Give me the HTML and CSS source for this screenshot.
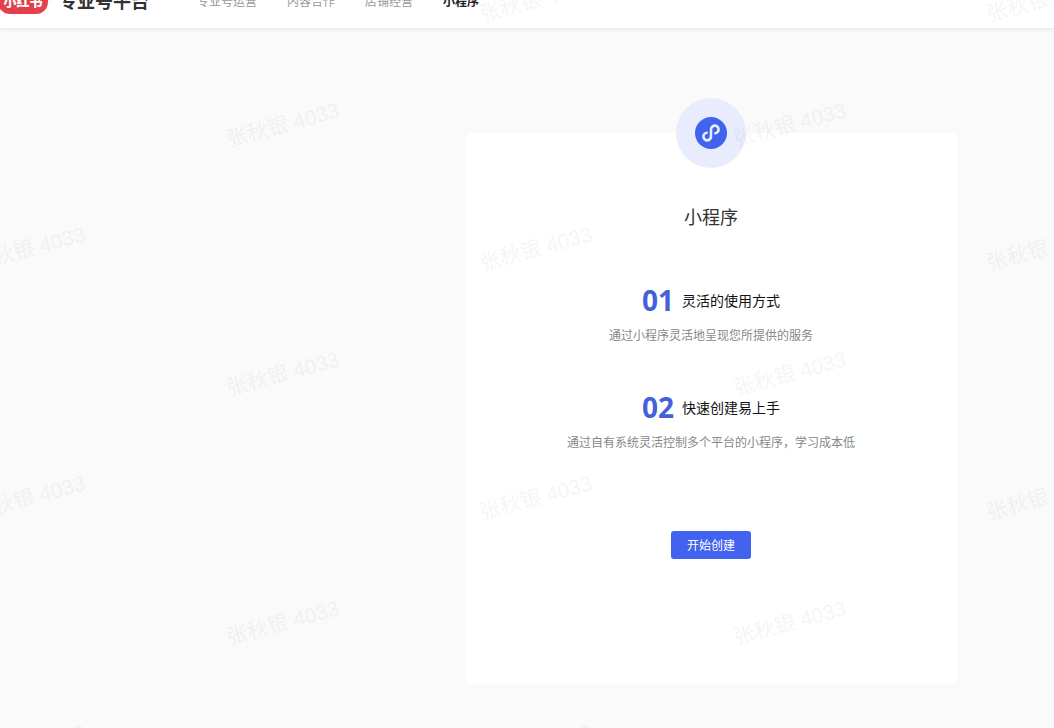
FILE: index.html
```
<!DOCTYPE html>
<html lang="zh-CN">
<head>
    <meta charset="UTF-8">
    <meta name="viewport" content="width=device-width, initial-scale=1.0">
    <title>小程序 - 专业号平台</title>
    <link rel="stylesheet" href="styles.css">
</head>
<body>
    <header class="header">
        <a class="logo" href="#">小红书</a>
        <span class="platform">专业号平台</span>
        <nav class="nav">
            <a href="#">专业号运营</a>
            <a href="#">内容合作</a>
            <a href="#">店铺经营</a>
            <a href="#" class="active">小程序</a>
        </nav>
    </header>

    <main class="main">
        <section class="card">
            <div class="card-icon">
                <svg width="32" height="32" viewBox="0 0 32 32">
                    <circle cx="16" cy="16" r="16" fill="#4262f0"/>
                    <path d="M11.6 15.8A3.8 3.8 0 1 0 16 19.5V12.5A3.8 3.8 0 1 1 20.4 16.2" fill="none" stroke="#e8ecfd" stroke-width="2.6" stroke-linecap="round"/>
                </svg>
            </div>
            <h1>小程序</h1>
            <div class="feature">
                <h2><span class="num">01</span>灵活的使用方式</h2>
                <p>通过小程序灵活地呈现您所提供的服务</p>
            </div>
            <div class="feature">
                <h2><span class="num">02</span>快速创建易上手</h2>
                <p>通过自有系统灵活控制多个平台的小程序，学习成本低</p>
            </div>
            <button type="button" class="create-btn">开始创建</button>
        </section>
    </main>

    <!-- 水印 -->
    <svg class="watermark" aria-hidden="true">
        <defs>
            <pattern id="mark" x="156" y="62" width="507" height="249" patternUnits="userSpaceOnUse">
                <text transform="translate(127 63) rotate(-15)" y="7">张秋银 4033</text>
                <text transform="translate(380 187) rotate(-15)" y="7">张秋银 4033</text>
            </pattern>
        </defs>
        <rect width="100%" height="100%" fill="url(#mark)"/>
    </svg>
</body>
</html>
```

FILE: styles.css
```
* {
    box-sizing: border-box;
}
body {
    margin: 0;
    min-height: 100vh;
    background-color: #fafafa;
    color: #333;
    font-family: "Noto Sans CJK SC", sans-serif;
    font-size: 12px;
}
a {
    color: inherit;
    text-decoration: none;
}
.header {
    display: flex;
    align-items: center;
    height: 56px;
    margin-top: -28px;
    background-color: #fff;
    box-shadow: 0 1px 4px #dfe3ee;
}
.logo {
    width: 50px;
    height: 28px;
    margin-left: -2px;
    border-radius: 12px;
    background-color: #e6404d;
    color: #fff;
    font-size: 13px;
    font-weight: 900;
    line-height: 30px;
    text-align: center;
}
.platform {
    margin-left: 11px;
    font-size: 18px;
    font-weight: 700;
}
.nav {
    display: flex;
    gap: 30px;
    margin-left: 48px;
    color: #999;
}
.nav .active {
    color: #222;
    font-weight: 700;
}
.main {
    display: flex;
    justify-content: flex-end;
    padding: 105px 97px 44px;
}
.card {
    display: flex;
    flex-direction: column;
    align-items: center;
    width: 100%;
    max-width: 492px;
    padding-bottom: 125px;
    border-radius: 6px;
    background-color: #fff;
}
.card-icon {
    display: flex;
    align-items: center;
    justify-content: center;
    width: 70px;
    height: 70px;
    margin-top: -35px;
    border-radius: 50%;
    background-color: #e8ecfc;
}
h1 {
    margin: 35px 0 53px;
    font-size: 18px;
    font-weight: 400;
    line-height: 26px;
}
.feature {
    margin-bottom: 45px;
    text-align: center;
}
h2 {
    display: flex;
    align-items: center;
    justify-content: center;
    gap: 8px;
    margin: 0 0 8px;
    color: #111;
    font-size: 14px;
    font-weight: 400;
    line-height: 36px;
}
.num {
    color: #4561d8;
    font-family: "Open Sans", sans-serif;
    font-size: 28px;
    font-weight: 700;
}
.feature p {
    margin: 0;
    color: #888;
    line-height: 18px;
}
.create-btn {
    height: 28px;
    margin-top: 35px;
    padding: 0 16px 2px;
    border: none;
    border-radius: 3px;
    background-color: #4262f0;
    color: #fff;
    font-family: inherit;
    font-size: 12px;
    cursor: pointer;
}
.watermark {
    position: fixed;
    inset: 0;
    width: 100%;
    height: 100%;
    pointer-events: none;
}
.watermark text {
    fill: #000;
    fill-opacity: 0.04;
    font-family: "Liberation Sans", "Noto Sans CJK SC", sans-serif;
    font-size: 21px;
    text-anchor: middle;
}
```
